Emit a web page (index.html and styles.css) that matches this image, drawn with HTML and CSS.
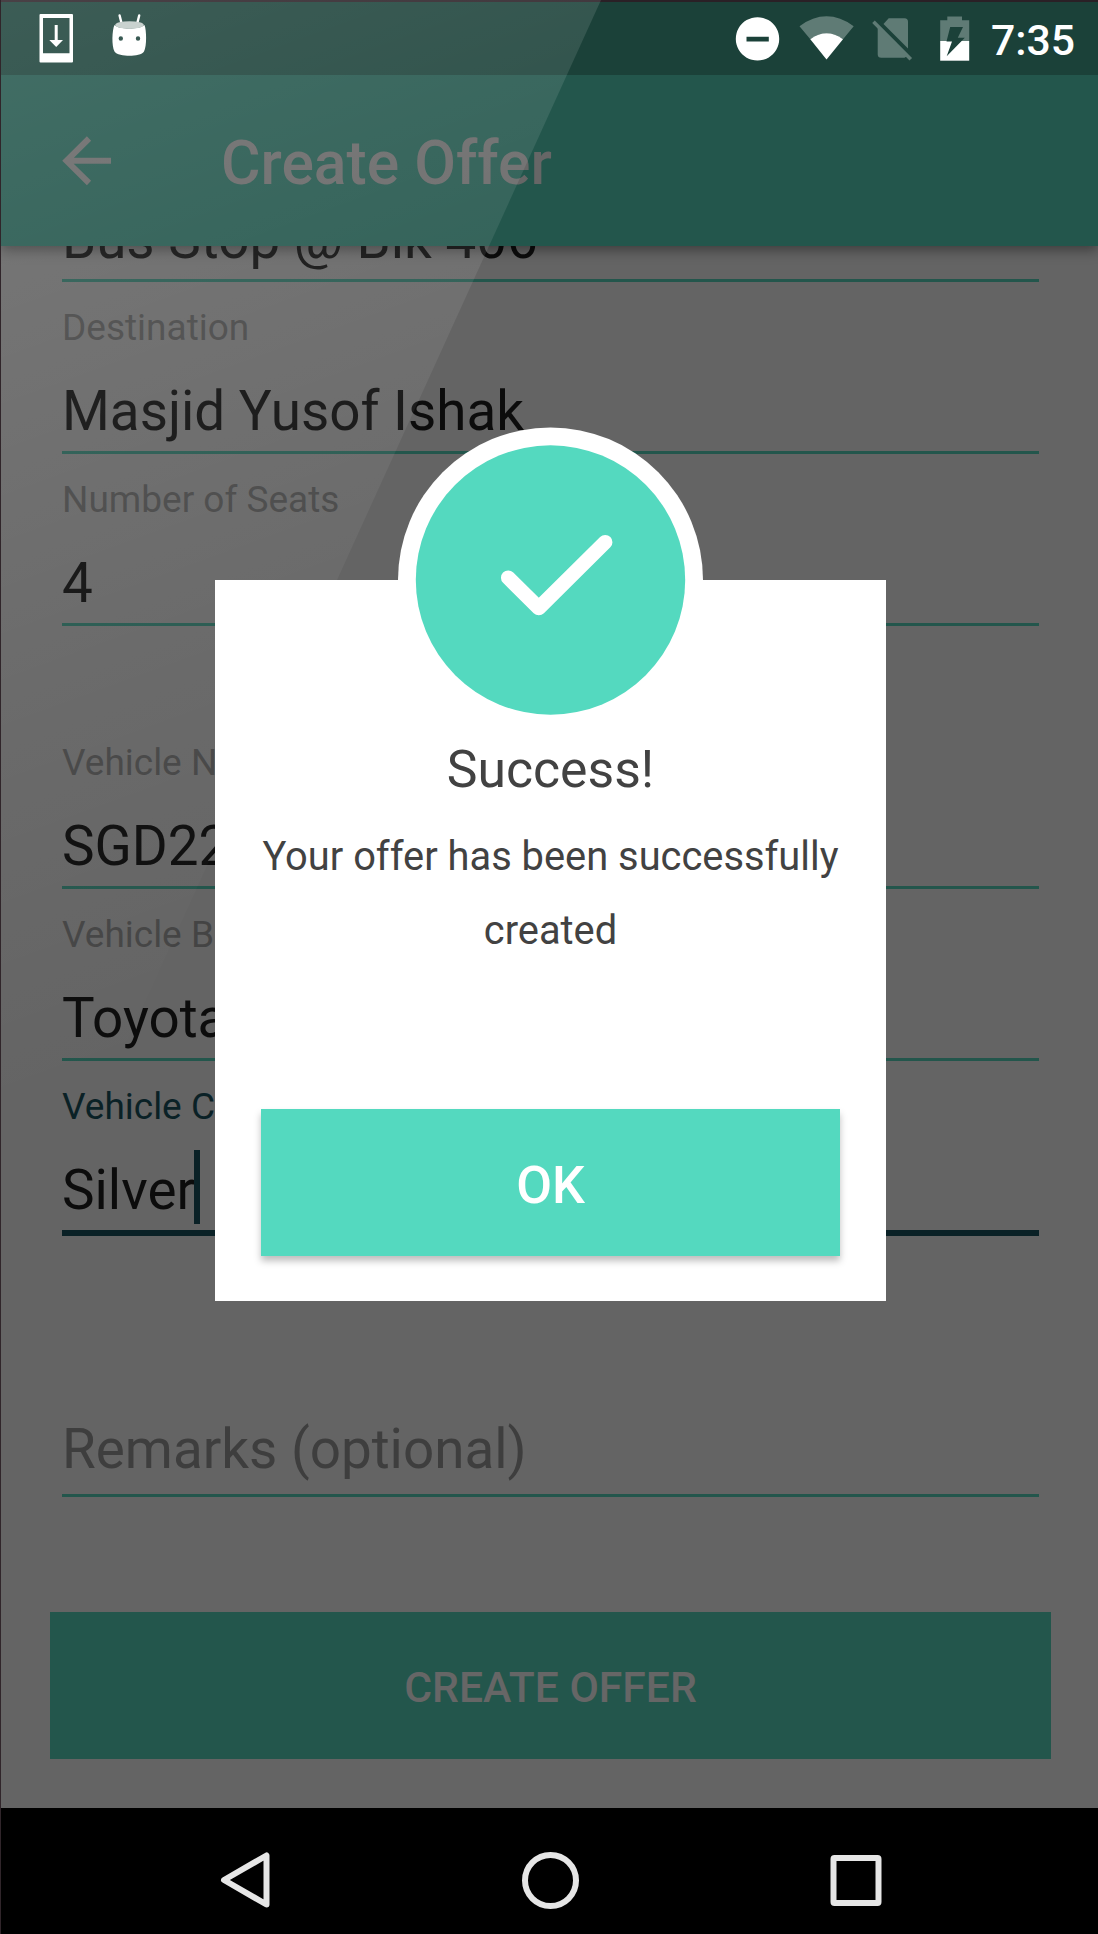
FILE: index.html
```html
<!DOCTYPE html>
<html lang="en">
<head>
<meta charset="utf-8">
<title>Create Offer</title>
<link rel="stylesheet" href="styles.css">
</head>
<body>
<div class="screen">
  <header class="status-bar">
    <svg class="status-left" width="160" height="73" viewBox="0 2 160 73" fill="#fff">
      <path fill-rule="evenodd" d="M40.500 14H72a1 1 0 0 1 1 1V61.500a1 1 0 0 1-1 1H40.500a1 1 0 0 1-1-1V15a1 1 0 0 1 1-1zM43 18V53.300H69.500V18z"/>
      <path d="M54.700 25h3v15h5.300L56.200 47 49.300 40h5.400z"/>
      <path d="M119.600 15.500l2 8M139.200 15.500l-2 8" stroke="#fff" stroke-width="2.400" stroke-linecap="round"/>
      <path fill-rule="evenodd" d="M114.500 25C119 29.700 139.500 29.700 144.500 25 146.500 30 147 46 144 51.500 142.500 54.500 135 55.800 129.500 55.800S116 54.500 114.500 51.500C111.500 46 112 30 114.500 25zM120.800 36.300a2.200 2.200 0 1 0 .01 4.400 2.200 2.200 0 0 0 0-4.400zM138 36.300a2.200 2.200 0 1 0 .01 4.400 2.200 2.200 0 0 0 0-4.400z"/>
      <ellipse cx="129.500" cy="25" rx="14.300" ry="3.800" fill="#c9d2cf"/>
    </svg>
    <div class="status-right">
      <svg width="250" height="73" viewBox="730 2 250 73" fill="#fff">
        <path fill-rule="evenodd" d="M757.500 17.200a21.700 21.700 0 1 0 .01 0zM746.500 36.700H768.800V41.400H746.500z"/>
        <path fill="#5f7b75" d="M799.500 26.200Q826.500 6.500 853.700 26.200L843 39.200Q826.500 27.500 810.300 39.200z"/>
        <path d="M810.300 39.200Q826.500 27.500 843 39.200L826.500 59.500z"/>
        <path fill="#5f7b75" d="M888.700 18.300H904.500a3.500 3.500 0 0 1 3.500 3.500V48.500L883.500 24zM877.700 27L906.500 56.500 904.500 57.800H881.200a3.500 3.500 0 0 1-3.500-3.500z"/>
        <path d="M873.500 21.800L910.800 59.200" stroke="#5f7b75" stroke-width="3.600"/>
        <path fill="#5f7b75" d="M947.300 16.500H962V20.300H969.200V41H940.200V20.300H947.300z"/>
        <path d="M940.200 41H969.200V60.700H940.200z"/>
        <path fill="#1b4139" d="M950.200 27H963L957.800 37.800H964.800L946.700 56.200 952 41.500H946.500z"/>
      </svg>
      <span class="clock">7:35</span>
    </div>
  </header>

  <div class="toolbar">
    <svg width="50" height="50" viewBox="0 0 50 50" fill="none" stroke="#666" stroke-width="6">
      <path d="M49 24.800H5M27 2.500L4.500 24.800 27 47"/>
    </svg>
    <h1>Create Offer</h1>
  </div>

  <main class="form">
    <div class="field clipped"><span class="value">Bus Stop @ Blk 406</span></div>
    <div class="field"><span class="label">Destination</span><span class="value">Masjid Yusof Ishak</span></div>
    <div class="field"><span class="label">Number of Seats</span><span class="value">4</span></div>
    <div class="field spaced"><span class="label">Vehicle N</span><span class="value">SGD22</span></div>
    <div class="field"><span class="label">Vehicle B</span><span class="value">Toyota</span></div>
    <div class="field focused"><span class="label">Vehicle C</span><span class="value">Silver<i class="caret"></i></span></div>
    <div class="field remarks"><span class="value">Remarks (optional)</span></div>
    <div class="submit">CREATE OFFER</div>
  </main>

  <nav class="nav-bar">
    <svg width="58" height="58" viewBox="0 0 58 58"><path d="M50.500 4.500V53.500L8 29z"/></svg>
    <svg width="58" height="58" viewBox="0 0 58 58"><circle cx="28.500" cy="29.500" r="25.500"/></svg>
    <svg width="58" height="58" viewBox="0 0 58 58"><rect x="6.500" y="7" width="45" height="45" rx="1"/></svg>
  </nav>

  <div class="glare"></div>

  <section class="dialog">
    <svg class="badge" width="306" height="306" viewBox="0 0 306 306">
      <circle cx="152.500" cy="153" r="152.500" fill="#fff"/>
      <circle cx="152.500" cy="153" r="134.700" fill="#54d9bf"/>
      <path d="M110.200 150.700L140.800 181 207.200 115.200" fill="none" stroke="#fff" stroke-width="14.500" stroke-linecap="round" stroke-linejoin="round"/>
    </svg>
    <h2>Success!</h2>
    <p>Your offer has been successfully created</p>
    <div class="ok">OK</div>
  </section>
</div>
</body>
</html>
```

FILE: styles.css
```css
* { box-sizing: border-box; }

body {
  margin: 0;
  background: #646464;
  font-family: Roboto, "Liberation Sans", sans-serif;
}

.screen {
  position: relative;
  display: flex;
  flex-direction: column;
  width: 1098px;
  height: 1934px;
  overflow: hidden;
  border-left: 1px solid #30252a;
  background: #646464;
}

.status-bar {
  display: flex;
  justify-content: space-between;
  height: 75px;
  border-top: 2px solid #2a2026;
  background: #1b4139;
  color: #fff;
}

.status-left,
.status-right,
.dialog { z-index: 2; }

.status-left { margin-left: -1px; }

.status-right {
  display: flex;
  width: 368px;
}

.clock {
  margin-left: 11px;
  font-size: 42.700px;
  font-weight: 500;
  line-height: 76px;
}

.toolbar {
  z-index: 1;
  display: flex;
  align-items: center;
  gap: 109px;
  height: 171px;
  padding-left: 61px;
  background: #23564c;
  box-shadow: 0 4px 12px rgba(0, 0, 0, .4);
  clip-path: inset(0 0 -20px 0);
}

.toolbar h1 {
  margin: 6px 0 0;
  color: #666;
  font-size: 60.600px;
  font-weight: 500;
  line-height: 72px;
}

.form {
  flex: 1;
  padding: 0 59px 0 61px;
}

.field {
  display: flex;
  flex-direction: column;
  height: 172px;
  padding-top: 25px;
  border-bottom: 3px solid #23564c;
}

.label {
  margin-bottom: 30px;
  color: #444;
  font-size: 37px;
  line-height: 42px;
}

.value {
  color: #0c0c0c;
  font-size: 54.800px;
  line-height: 64px;
  white-space: nowrap;
}

.field.clipped {
  height: 36px;
  padding: 0;
}

.clipped .value { margin-top: -39px; }

.field.spaced { margin-top: 91px; }

.field.focused {
  height: 175px;
  border-bottom: 6px solid #0a2126;
}

.focused .label { color: #0a2126; }

.focused .value {
  display: flex;
  align-items: center;
}

.caret {
  width: 6px;
  height: 74px;
  margin: -11px 0 -5px -1px;
  background: #0a2126;
}

.field.remarks {
  height: 82px;
  margin-top: 179px;
  padding: 0;
  margin-bottom: 115px;
}

.remarks .value { color: #3e3e3e; margin-top: 2px; }

.submit {
  height: 147px;
  margin: 0 -12px;
  background: #23564c;
  color: #666;
  font-size: 42.700px;
  font-weight: 500;
  line-height: 150px;
  text-align: center;
}

.nav-bar {
  display: flex;
  justify-content: space-between;
  height: 126px;
  padding: 43px 213px 0 215px;
  background: #000;
}

.nav-bar svg {
  fill: none;
  stroke: #e6e6e6;
  stroke-width: 6;
  stroke-linejoin: round;
}

/* diagonal sheen across the upper left of the screen */
.glare {
  position: absolute;
  inset: 0;
  z-index: 1;
  clip-path: polygon(0 0, 600px 0, 72px 1160px, 0 1160px);
  background: linear-gradient(160deg,
    rgba(255, 255, 255, .145) 0,
    rgba(255, 255, 255, .1) 280px,
    rgba(255, 255, 255, .04) 700px,
    rgba(255, 255, 255, 0) 1050px);
}

.dialog {
  position: absolute;
  left: 214px;
  top: 580px;
  width: 671px;
  height: 721px;
  padding: 159px 46px 0;
  background: #fff;
  color: #424242;
  text-align: center;
}

.badge {
  position: absolute;
  left: 183px;
  top: -153px;
}

.dialog h2 {
  margin: 0;
  font-size: 51.700px;
  font-weight: 400;
  line-height: 62px;
}

.dialog p {
  height: 148px;
  margin: 19px 0 141px;
  font-size: 39.850px;
  line-height: 74px;
}

.ok {
  height: 146.500px;
  background: #54d9bf;
  box-shadow: 0 5px 7px rgba(0, 0, 0, .26);
  color: #fff;
  font-size: 52px;
  font-weight: 500;
  line-height: 153px;
}
```
